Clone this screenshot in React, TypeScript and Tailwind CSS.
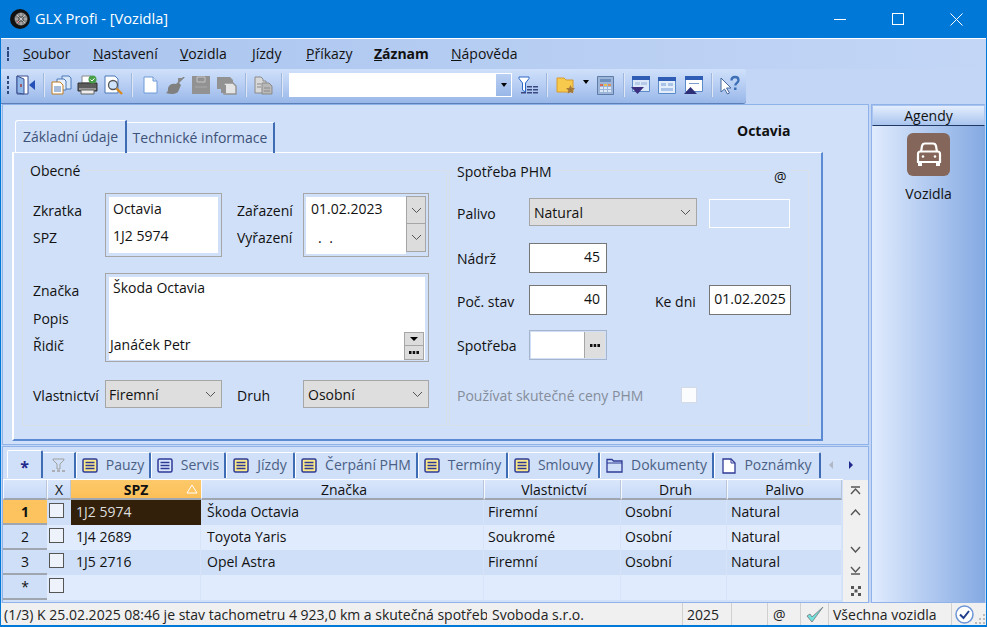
import React from "react";

const F = { fontFamily: '"Open Sans","Noto Sans",sans-serif' };

function Chevron({ cls = "" }: { cls?: string }) {
  return (
    <svg width="11" height="7" viewBox="0 0 11 7" className={cls}>
      <path d="M1 1l4.5 4.5L10 1" fill="none" stroke="#555" strokeWidth="1" />
    </svg>
  );
}
function Dots() {
  return (
    <svg width="10" height="3" viewBox="0 0 10 3">
      <path d="M0 0h2.5v3H0zM3.7 0h2.5v3H3.7zM7.4 0H10v3H7.4z" fill="#111" />
    </svg>
  );
}
function Sep() {
  return <div className="w-[2px] h-[24px] bg-gradient-to-r from-[#7f9fd2] to-white shrink-0" />;
}
function Grip({ h }: { h: string }) {
  return (
    <div className={`flex flex-col justify-between w-[2px] shrink-0 ${h}`}>
      {[0, 1, 2, 3].map((i) => (
        <div key={i} className="w-[2px] h-[3px] bg-[#2c4a80]" />
      ))}
    </div>
  );
}

const I = {
  door: (
    <svg width="19" height="20" viewBox="0 0 19 20">
      <path d="M1 1h11v18H1z" fill="#fff" stroke="#3a4d8f" />
      <path d="M1 1l7 3v15l-7-1z" fill="#8fb8e8" stroke="#3a4d8f" />
      <path d="M5 9v3" stroke="#a33" strokeWidth="1.4" />
      <path d="M13 10l6-5v10z" fill="#2450b8" />
    </svg>
  ),
  copy: (
    <svg width="21" height="20" viewBox="0 0 21 20">
      <path d="M11 1h7l2 2v11h-9z" fill="#d7e6f8" stroke="#4a78b8" />
      <path d="M6 4h7l2 2v9H6z" fill="#e8f0fb" stroke="#4a78b8" />
      <path d="M1 7h8l3 3v9H1z" fill="#fff" stroke="#c07a20" />
      <path d="M3 12h7M3 14h7M3 16h7" stroke="#4a78b8" />
    </svg>
  ),
  print: (
    <svg width="21" height="20" viewBox="0 0 21 20">
      <path d="M5 1h9v7H5z" fill="#fff" stroke="#888" />
      <path d="M1 8h19v8H1z" fill="#5c5c5c" stroke="#333" />
      <path d="M2 13h17v2H2z" fill="#999" />
      <path d="M4 15h13v4H4z" fill="#eee" stroke="#666" />
      <circle cx="15.5" cy="4.5" r="4" fill="#4aa04a" />
      <path d="M13.5 4.5l1.5 1.5 2.5-2.7" stroke="#fff" fill="none" />
    </svg>
  ),
  preview: (
    <svg width="20" height="20" viewBox="0 0 20 20">
      <path d="M1 1h10l3 3v14H1z" fill="#fff" stroke="#4a78b8" />
      <circle cx="9" cy="10" r="4.5" fill="#cfe4fa" stroke="#555" strokeWidth="1.3" />
      <path d="M12.5 13.5l5.5 5.5" stroke="#d88a20" strokeWidth="2.4" />
    </svg>
  ),
  page: (
    <svg width="15" height="18" viewBox="0 0 15 18">
      <path d="M1 1h9l4 4v12H1z" fill="#fff" stroke="#6c9ad8" />
      <path d="M10 1v4h4" fill="#cfe0f6" stroke="#6c9ad8" />
    </svg>
  ),
  brush: (
    <svg width="21" height="19" viewBox="0 0 21 19">
      <path d="M20 1l-6 6 2 2-3 7c-4 3-8 2-12 1 2-1 2-3 2-5 1-4 5-5 8-4l7-7z" fill="#808080" />
      <path d="M13 2h5l-5 5z" fill="#8a8a8a" />
    </svg>
  ),
  disk: (
    <svg width="18" height="18" viewBox="0 0 18 18">
      <path d="M0 0h18v18H0z" fill="#929292" />
      <path d="M5 1h8v5H5z" fill="none" stroke="#c4c4c4" />
      <path d="M3 11h12" stroke="#a8a8a8" />
    </svg>
  ),
  pages: (
    <svg width="20" height="19" viewBox="0 0 20 19">
      <path d="M0 1h13l3 3v9H0z" fill="#929292" />
      <path d="M7 7h9l3 3v8H7z" fill="#e4e4e4" stroke="#929292" strokeWidth="1.4" />
      <path d="M4 9h5v8H4z" fill="#929292" />
    </svg>
  ),
  docs: (
    <svg width="19" height="19" viewBox="0 0 19 19">
      <path d="M1 1h6l2 2v2h3v12H1z" fill="#d8d8d8" stroke="#8a8a8a" />
      <path d="M8 7h7l3 3v8H8z" fill="#b8b8b8" stroke="#8a8a8a" />
      <path d="M3 8h4M3 11h4M10 12h6M10 15h6" stroke="#8a8a8a" />
    </svg>
  ),
  filter: (
    <svg width="21" height="18" viewBox="0 0 21 18">
      <path d="M1 1h10v1.5L7.5 7v9l-3-2V7L1 2.5z" fill="#fff" stroke="#2a66c8" />
      <path d="M9 10h5v1.6H9zM9 13h5v1.6H9zM3 16h5v1.6H3zM9 16h5v1.6H9zM15 10h5v1.6h-5zM15 13h5v1.6h-5zM15 16h5v1.6h-5z" fill="#3a4a80" />
    </svg>
  ),
  folder: (
    <svg width="20" height="19" viewBox="0 0 20 19">
      <path d="M1 2h7l2 2h7v12H1z" fill="#f7c94c" stroke="#d79a2e" />
      <path d="M14.5 9l1.4 2.9 3.1.4-2.3 2.2.6 3.1-2.8-1.500-2.8 1.500.6-3.1-2.3-2.2 3.1-.4z" fill="#a2773a" />
    </svg>
  ),
  calc: (
    <svg width="17" height="19" viewBox="0 0 17 19">
      <path d="M.5.5h16v18H.5z" fill="#9db5d8" stroke="#5f7ca8" />
      <path d="M3 3h11v3H3z" fill="#6f8fbd" />
      <path d="M3 8h3v2H3z" fill="#d86a5a" />
      <path d="M7 8h3v2H7z" fill="#e8c14a" />
      <path d="M11 8h3v2h-3z" fill="#e0905a" />
      <path d="M3 11h3v2H3zM7 11h3v2H7zM11 11h3v2h-3zM3 14h3v2H3zM7 14h3v2H7zM11 14h3v2h-3z" fill="#dbe8f7" />
    </svg>
  ),
  winDown: (
    <svg width="19" height="19" viewBox="0 0 19 19">
      <path d="M1.500.5h17v15h-17z" fill="#dbe8fa" stroke="#5a8ac8" />
      <path d="M1 0h18v4H1z" fill="#2f5db5" />
      <path d="M4 6h5v3H4zM10 6h6v3h-6z" fill="#b5cbe8" />
      <path d="M0 11h13l-6.500 7z" fill="#3a2f80" />
    </svg>
  ),
  win: (
    <svg width="18" height="17" viewBox="0 0 18 17">
      <path d="M.5.5h17v16H.5z" fill="#e4eefb" stroke="#5a8ac8" />
      <path d="M0 0h18v4H0z" fill="#2f5db5" />
      <path d="M3 6h5v3H3zM10 6h5v3h-5zM3 11h12v3H3z" fill="#a9c4e8" />
    </svg>
  ),
  winUp: (
    <svg width="19" height="19" viewBox="0 0 19 19">
      <path d="M1.500.5h17v15h-17z" fill="#fff" stroke="#5a8ac8" />
      <path d="M1 0h18v4H1z" fill="#2f5db5" />
      <path d="M5 7h10v1H5z" fill="#7a9ccc" />
      <path d="M0 18h13L6.500 11z" fill="#2c2f78" />
    </svg>
  ),
  help: (
    <svg width="21" height="20" viewBox="0 0 21 20">
      <path d="M1 3v14l3.500-3 3 5 2-1-3-5H11z" fill="#fff" stroke="#47689c" />
      <path d="M11.500 5.500c0-2 1.500-3.500 3.500-3.500s3.500 1.300 3.500 3.200c0 2.500-3.200 2.800-3.200 5.300" fill="none" stroke="#3c6fb5" strokeWidth="2.300" />
      <path d="M14 12.500h2.500V15H14z" fill="#3c6fb5" />
    </svg>
  ),
};

function Labels({ items }: { items: string[] }) {
  return (
    <div className="flex flex-col pt-[4px]">
      {items.map((t) => (
        <div key={t} className="h-[27px] flex items-center">{t}</div>
      ))}
    </div>
  );
}
function Select({ w, text, pl = "pl-[4px]" }: { w: string; text: string; pl?: string }) {
  return (
    <div className={`${w} h-[28px] bg-[#dedede] border border-[#a6a6a6] flex items-center justify-between ${pl} pr-[5px]`}>
      <span>{text}</span>
      <Chevron />
    </div>
  );
}
function NumInput({ v, w = "w-[78px]", right = true }: { v: string; w?: string; right?: boolean }) {
  return (
    <div className={`${w} h-[30px] bg-white border border-[#767676] flex items-center pb-[3px] ${right ? "justify-end pr-[6px]" : "justify-center"}`}>{v}</div>
  );
}
function TabIcon({ kind }: { kind: string }) {
  if (kind === "folder")
    return (
      <svg width="17" height="15" viewBox="0 0 17 15">
        <path d="M1 3V1.500h5L7.500 3H16v11H1z" fill="none" stroke="#2e3a96" strokeWidth="1.300" />
        <path d="M1 5h15" stroke="#2e3a96" />
      </svg>
    );
  if (kind === "note")
    return (
      <svg width="14" height="16" viewBox="0 0 14 16">
        <path d="M1 1h8l4 4v10H1z" fill="#fff" stroke="#2e3a96" strokeWidth="1.300" />
        <path d="M9 1v4h4" fill="none" stroke="#2e3a96" />
      </svg>
    );
  const y = kind === "yellow";
  return (
    <svg width="16" height="15" viewBox="0 0 16 15">
      <rect x="1" y="1" width="14" height="13" rx="1.500" fill={y ? "#fbe98a" : "#d9e6fb"} stroke="#2e3a96" strokeWidth="1.500" />
      <path d="M3.500 4.500h9M3.500 7.500h9M3.500 10.500h9" stroke="#2e3a96" strokeWidth="1.300" />
    </svg>
  );
}
function BTab({ w, icon, text, gap = "gap-[8px]" }: { w: string; icon: string; text: string; gap?: string }) {
  return (
    <div className={`${w} h-[26px] flex items-center justify-center ${gap} border-t border-l border-white border-r-2 border-r-[#3f6db5] text-[#4a5f85] rounded-t-[2px] shrink-0`}>
      <TabIcon kind={icon} />
      <span className="pb-[2px]">{text}</span>
    </div>
  );
}

const rows = [
  { n: "1", spz: "1J2 5974", z: "Škoda Octavia", v: "Firemní", d: "Osobní", p: "Natural" },
  { n: "2", spz: "1J4 2689", z: "Toyota Yaris", v: "Soukromé", d: "Osobní", p: "Natural" },
  { n: "3", spz: "1J5 2716", z: "Opel Astra", v: "Firemní", d: "Osobní", p: "Natural" },
  { n: "*", spz: "", z: "", v: "", d: "", p: "" },
];

function Head({ w, t, children, pl = "pl-[3px]" }: { w: string; t: string; children?: React.ReactNode; pl?: string }) {
  return (
    <div className={`${w} h-full flex items-center justify-center ${pl} border-l border-l-white/80 border-r border-r-[#b9c6da] border-b-2 border-b-[#a0a6b0] bg-gradient-to-b from-[#d9e6fb] to-[#c6d9f7] shrink-0`}>
      {t}
      {children}
    </div>
  );
}
function Cell({ w, t, bg, pl = "pl-[4px]" }: { w: string; t: string; bg: string; pl?: string }) {
  return <div className={`${w} h-full flex items-center ${pl} pb-[2px] border-r border-r-[#d6e3f8] shrink-0 ${bg}`}>{t}</div>;
}

export default function App() {
  return (
    <div style={F} className="w-[987px] h-[627px] overflow-hidden flex flex-col bg-[#c3d6f6] border-x border-b-2 border-[#0078d7] text-[14px] leading-[19px] text-[#111]">
      {/* title */}
      <div className="h-[38px] bg-[#0078d7] flex items-center text-white shrink-0 -mx-px">
        <svg width="20" height="20" viewBox="0 0 20 20" className="ml-[10px]">
          <circle cx="10" cy="10" r="10" fill="#111" />
          <circle cx="11" cy="10" r="6.500" fill="#888" />
          <circle cx="11" cy="10" r="3" fill="#333" />
          <circle cx="8" cy="13" r="1" fill="#c33" />
          <path d="M11 4v12M5 10h12M7 6l8 8M15 6l-8 8" stroke="#ddd" strokeWidth=".7" />
        </svg>
        <span className="ml-[5px] text-[14.6px] pb-[1px]">GLX Profi - [Vozidla]</span>
        <div className="ml-auto flex mr-[2px]">
          <div className="w-[58px] h-[38px] flex items-center justify-center">
            <div className="w-[12px] h-px bg-white" />
          </div>
          <div className="w-[58px] h-[38px] flex items-center justify-center">
            <div className="w-[12px] h-[12px] border border-white" />
          </div>
          <div className="w-[58px] h-[38px] flex items-center justify-center">
            <svg width="13" height="13" viewBox="0 0 13 13"><path d="M.5.500l12 12M12.500.500l-12 12" stroke="#fff" /></svg>
          </div>
        </div>
      </div>
      <div className="h-px bg-white shrink-0" />

      {/* menu */}
      <div className="h-[30px] bg-gradient-to-r from-[#a9c4ee] to-[#c3d6f6] flex items-center pl-[6px] shrink-0">
        <Grip h="h-[14px]" />
        <div className="flex ml-[14px] pb-[1px]">
          <span className="w-[70px]"><u>S</u>oubor</span>
          <span className="w-[87px]"><u>N</u>astavení</span>
          <span className="w-[72px]"><u>V</u>ozidla</span>
          <span className="w-[54px]"><u>J</u>ízdy</span>
          <span className="w-[68px]"><u>P</u>říkazy</span>
          <span className="w-[77px] font-bold"><u>Z</u>áznam</span>
          <span><u>N</u>ápověda</span>
        </div>
      </div>

      {/* toolbar */}
      <div className="h-[35px] shrink-0 flex">
        <div className="w-[745px] h-[35px] rounded-r-[3px] border-b border-b-[#5d7fb8] bg-gradient-to-b from-[#cfe0fa] via-[#b6cdf3] to-[#98b7e8] flex items-center pl-[6px] pb-[2px]">
          <Grip h="h-[18px]" />
          <div className="ml-[7px]">{I.door}</div>
          <div className="ml-[8px]"><Sep /></div>
          <div className="ml-[6px]">{I.copy}</div>
          <div className="ml-[5px]">{I.print}</div>
          <div className="ml-[6px]">{I.preview}</div>
          <div className="ml-[7px]"><Sep /></div>
          <div className="ml-[10px]">{I.page}</div>
          <div className="ml-[7px]">{I.brush}</div>
          <div className="ml-[6px]">{I.disk}</div>
          <div className="ml-[7px]">{I.pages}</div>
          <div className="ml-[8px]"><Sep /></div>
          <div className="ml-[7px]">{I.docs}</div>
          <div className="ml-[8px]"><Sep /></div>
          <div className="ml-[6px] w-[223px] h-[24px] bg-white flex justify-end">
            <div className="w-[17px] h-full border border-white bg-gradient-to-b from-[#b9cff3] to-[#98b7e8] flex items-center justify-center">
              <div className="w-0 h-0 border-x-[3px] border-x-transparent border-t-[4px] border-t-black" />
            </div>
          </div>
          <div className="ml-[6px]">{I.filter}</div>
          <div className="ml-[7px]"><Sep /></div>
          <div className="ml-[8px]">{I.folder}</div>
          <div className="ml-[7px] mb-[6px] w-0 h-0 border-x-[3px] border-x-transparent border-t-[4px] border-t-black" />
          <div className="ml-[8px]">{I.calc}</div>
          <div className="ml-[9px]"><Sep /></div>
          <div className="ml-[6px]">{I.winDown}</div>
          <div className="ml-[8px]">{I.win}</div>
          <div className="ml-[8px]">{I.winUp}</div>
          <div className="ml-[8px]"><Sep /></div>
          <div className="ml-[7px]">{I.help}</div>
        </div>
      </div>

      {/* body */}
      <div className="flex-1 min-h-0 flex pl-px">
        <div className="w-[867px] flex flex-col shrink-0">
          {/* top pane */}
          <div className="h-[341px] border border-[#8fb2e8] bg-[#d0e0f8] pl-[9px] pt-[15px] shrink-0">
            <div className="flex h-[33px] relative">
              <div className="w-[112px] h-[33px] flex items-center justify-center border-t border-l border-white border-r-2 border-r-[#3f6db5] rounded-tl-[3px] ml-[3px] text-[#3d5278] pb-[1px]">Základní údaje</div>
              <div className="w-[148px] h-[31px] mt-[2px] flex items-center justify-center border-t border-white border-r-2 border-r-[#3f6db5] text-[#3d5278] pb-[2px]">Technické informace</div>
              <div className="absolute left-[725px] top-[1px] font-bold">Octavia</div>
            </div>
            <div className="w-[811px] h-[289px] border-t border-l-2 border-white border-r-2 border-r-[#5a8bd4] border-b-2 border-b-[#5a8bd4] pl-[8px] pt-[17px] flex gap-[2px] -mt-px">
              {/* Obecne */}
              <div className="relative w-[425px] h-[256px] border border-[#d9e0ea] pl-[10px] pt-[22px] flex flex-col shrink-0">
                <div className="absolute left-[3px] -top-[10px] px-[4px] bg-[#d0e0f8]">Obecné</div>
                <div className="flex h-[64px]">
                  <div className="w-[72px]"><Labels items={["Zkratka", "SPZ"]} /></div>
                  <div className="w-[117px] h-[64px] border border-[#a6a6a6] p-[3px]">
                    <div className="bg-white h-full pl-[4px] flex flex-col text-[#111]">
                      <div className="h-[27px] flex items-center pb-[6px] pt-[2px]">Octavia</div>
                      <div className="h-[27px] flex items-center pb-[4px]">1J2 5974</div>
                    </div>
                  </div>
                  <div className="w-[66px] ml-[15px]"><Labels items={["Zařazení", "Vyřazení"]} /></div>
                  <div className="w-[126px] h-[64px] border border-[#a6a6a6] p-[2px] flex">
                    <div className="flex-1 bg-white flex flex-col pl-[5px] mt-px">
                      <div className="h-[27px] flex items-center pb-[5px]">01.02.2023</div>
                      <div className="h-[27px] flex items-center pb-px pl-[7px] tracking-[2px]">. .</div>
                    </div>
                    <div className="w-[20px] flex flex-col">
                      <div className="h-[28px] bg-[#dcdcdc] border border-[#a6a6a6] flex items-center justify-center"><Chevron /></div>
                      <div className="h-[28px] bg-[#dcdcdc] border border-t-0 border-[#a6a6a6] flex items-center justify-center"><Chevron /></div>
                    </div>
                  </div>
                </div>
                <div className="flex h-[89px] mt-[16px]">
                  <div className="w-[72px] flex flex-col">
                    <div className="h-[34px] shrink-0 flex items-center">Značka</div>
                    <div className="h-[22px] shrink-0 flex items-center">Popis</div>
                    <div className="h-[32px] shrink-0 flex items-center">Řidič</div>
                  </div>
                  <div className="w-[324px] h-[89px] border border-[#a6a6a6] p-[3px] pb-[1px]">
                    <div className="bg-white h-full flex flex-col relative">
                      <div className="pl-[4px] pt-[1px]">Škoda Octavia</div>
                      <div className="mt-auto flex items-end justify-between pl-[1px]">
                        <span className="pb-[6px]">Janáček Petr</span>
                        <div className="flex flex-col w-[20px] mr-px">
                          <div className="h-[14px] bg-[#dcdcdc] border border-[#a6a6a6] flex items-center justify-center">
                            <div className="w-0 h-0 border-x-[4px] border-x-transparent border-t-[4px] border-t-black" />
                          </div>
                          <div className="h-[14px] bg-[#dcdcdc] border border-t-0 border-[#a6a6a6] flex items-center justify-center"><Dots /></div>
                        </div>
                      </div>
                    </div>
                  </div>
                </div>
                <div className="flex h-[28px] mt-[18px] items-center">
                  <div className="w-[72px] whitespace-nowrap pt-[3px]">Vlastnictví</div>
                  <Select w="w-[117px]" text="Firemní" pl="pl-[3px]" />
                  <div className="w-[66px] ml-[15px] pt-[3px]">Druh</div>
                  <Select w="w-[126px]" text="Osobní" />
                </div>
              </div>
              {/* Spotreba */}
              <div className="relative w-[360px] h-[256px] border border-[#d9e0ea] pl-[7px] pt-[27px] flex flex-col shrink-0">
                <div className="absolute left-[3px] -top-[9px] px-[4px] bg-[#d0e0f8]">Spotřeba PHM</div>
                <div className="absolute left-[321px] -top-[4px] px-[3px] bg-[#d0e0f8]">@</div>
                <div className="flex items-center h-[28px]">
                  <div className="w-[72px] pt-[2px]">Palivo</div>
                  <Select w="w-[168px]" text="Natural" />
                  <div className="w-[81px] h-[29px] ml-[12px] border border-white mt-[2px]" />
                </div>
                <div className="flex items-center h-[30px] mt-[17px]">
                  <div className="w-[72px]">Nádrž</div>
                  <NumInput v="45" />
                </div>
                <div className="flex items-center h-[30px] mt-[12px]">
                  <div className="w-[72px] pt-[2px]">Poč. stav</div>
                  <NumInput v="40" />
                  <div className="w-[54px] ml-[48px] pt-[2px]">Ke dni</div>
                  <NumInput v="01.02.2025" w="w-[82px]" right={false} />
                </div>
                <div className="flex items-center h-[30px] mt-[15px]">
                  <div className="w-[72px] pt-px">Spotřeba</div>
                  <div className="w-[78px] h-[30px] border border-[#a6b4cc] p-px flex">
                    <div className="flex-1 bg-white" />
                    <div className="w-[21px] bg-[#dedede] border-l border-[#a6a6a6] flex items-center justify-center"><Dots /></div>
                  </div>
                </div>
                <div className="flex items-center h-[16px] mt-[27px] text-[#858d9b]">
                  <div className="w-[224px] whitespace-nowrap">Používat skutečné ceny PHM</div>
                  <div className="w-[16px] h-[16px] bg-white/90 border border-[#d4dbe6]" />
                </div>
              </div>
            </div>
          </div>

          {/* bottom pane */}
          <div className="h-[157px] mt-[1px] border border-[#8fb2e8] bg-[#d0e0f8] flex flex-col shrink-0">
            <div className="h-[33px] flex items-end pl-[4px] pb-px border-b border-b-white shrink-0 w-[840px]">
              <div className="w-[36px] h-[28px] border-t border-l border-white border-r-2 border-r-[#3f6db5] rounded-t-[2px] flex items-center justify-center text-[#1f2a8c] font-bold text-[16px] pt-[6px] shrink-0">*</div>
              <div className="w-[33px] h-[26px] border-t border-white border-r-2 border-r-[#3f6db5] flex items-center justify-center shrink-0">
                <svg width="15" height="15" viewBox="0 0 15 15">
                  <path d="M2 1h11v1L9 6v5l-3 0V6L2 2z" fill="none" stroke="#a0a0a0" />
                  <path d="M1 13h3M6 13h3M11 13h3" stroke="#a0a0a0" strokeWidth="1.500" />
                </svg>
              </div>
              <BTab w="w-[75px]" icon="yellow" text="Pauzy" />
              <BTab w="w-[75px]" icon="blue" text="Servis" />
              <BTab w="w-[69px]" icon="yellow" text="Jízdy" />
              <BTab w="w-[123px]" icon="yellow" text="Čerpání PHM" />
              <BTab w="w-[90px]" icon="yellow" text="Termíny" />
              <BTab w="w-[92px]" icon="yellow" text="Smlouvy" />
              <BTab w="w-[114px]" icon="folder" text="Dokumenty" />
              <BTab w="w-[107px]" icon="note" text="Poznámky" />
              <div className="flex items-center h-[26px] ml-[8px] gap-[16px]">
                <div className="w-0 h-0 border-y-[4px] border-y-transparent border-r-[4px] border-r-[#b0b8c8]" />
                <div className="w-0 h-0 border-y-[4px] border-y-transparent border-l-[4px] border-l-[#1f2a8c]" />
              </div>
            </div>
            <div className="flex flex-1 min-h-0">
              <div className="w-[839px] flex flex-col shrink-0">
                <div className="flex h-[20px] shrink-0">
                  <Head w="w-[44px]" t="" />
                  <Head w="w-[24px]" t="X" pl="pl-0" />
                  <div className="w-[130px] h-full relative flex items-center justify-center font-bold bg-gradient-to-b from-[#fdc96a] to-[#fcbf58] border-b-2 border-b-[#a0a6b0] shrink-0">
                    SPZ
                    <svg width="12" height="10" viewBox="0 0 12 10" className="absolute right-[3px] top-[4px]"><path d="M6 1l5 8H1z" fill="none" stroke="#fff" /></svg>
                  </div>
                  <Head w="w-[283px]" t="Značka" />
                  <Head w="w-[137px]" t="Vlastnictví" />
                  <Head w="w-[106px]" t="Druh" />
                  <Head w="w-[115px]" t="Palivo" pl="pl-0" />
                </div>
                {rows.map((r, i) => {
                  const bg = i % 2 === 0 ? "bg-[#cfdff8]" : "bg-[#e0ebfd]";
                  return (
                    <div key={r.n} className="flex h-[25px] shrink-0">
                      <div className={`w-[44px] h-full flex items-center justify-center pb-[1px] border-b-2 border-b-[#a0a6b0] shrink-0 ${i === 0 ? "bg-[#fdc35e] font-bold" : "bg-[#cfdff8]"}`}>{r.n}</div>
                      <div className={`w-[24px] h-full flex items-center justify-center pr-[5px] pb-[4px] shrink-0 ${bg}`}>
                        <div className="w-[15px] h-[15px] bg-[#eef3fb] border border-[#555] shrink-0" />
                      </div>
                      {i === 0 ? (
                        <div className="w-[130px] h-full flex items-center pl-[5px] pb-[2px] bg-[#33200a] text-[#ddd] shrink-0">{r.spz}</div>
                      ) : (
                        <div className={`w-[130px] h-full flex items-center pl-[5px] pb-[2px] border-r border-r-[#d6e3f8] shrink-0 ${bg}`}>{r.spz}</div>
                      )}
                      <Cell w="w-[283px]" t={r.z} bg={bg} pl="pl-[6px]" />
                      <Cell w="w-[137px]" t={r.v} bg={bg} />
                      <Cell w="w-[106px]" t={r.d} bg={bg} />
                      <Cell w="w-[115px]" t={r.p} bg={bg} />
                    </div>
                  );
                })}
              </div>
              <div className="w-[25px] bg-[#f0f0f0] flex flex-col items-center pt-[6px] ml-px">
                <svg width="11" height="9" viewBox="0 0 11 9"><path d="M1 1h9M1 8l4.500-5L10 8" fill="none" stroke="#555" strokeWidth="1.400" /></svg>
                <svg width="11" height="7" viewBox="0 0 11 7" className="mt-[14px]"><path d="M1 6l4.500-5L10 6" fill="none" stroke="#555" strokeWidth="1.400" /></svg>
                <svg width="11" height="7" viewBox="0 0 11 7" className="mt-[30px]"><path d="M1 1l4.500 5L10 1" fill="none" stroke="#555" strokeWidth="1.400" /></svg>
                <svg width="11" height="9" viewBox="0 0 11 9" className="mt-[13px]"><path d="M1 1l4.500 5L10 1M1 8h9" fill="none" stroke="#555" strokeWidth="1.400" /></svg>
                <svg width="10" height="10" viewBox="0 0 10 10" className="mt-[11px]"><path d="M0 0h3v3H0zM7 0h3v3H7zM3.500 3.500h3v3h-3zM0 7h3v3H0zM7 7h3v3H7z" fill="#555" /></svg>
              </div>
            </div>
          </div>
        </div>

        {/* right pane */}
        <div className="w-[114px] ml-[2px] h-[499px] border border-[#8fb2e8] border-r-0 bg-gradient-to-r from-[#e0ebfd] to-[#84a9e2] flex flex-col items-center shrink-0 mr-[2px]">
          <div className="w-full h-[21px] border border-[#a9c4ee] border-b-[#1f3864] bg-gradient-to-b from-[#e4eefd] to-[#a9c4ee] flex items-center justify-center shrink-0">Agendy</div>
          <div className="w-[43px] h-[43px] rounded-[6px] bg-[#84675a] mt-[7px] flex items-center justify-center">
            <svg width="28" height="26" viewBox="0 0 28 26">
              <path d="M6 10l1-6c.3-1.500 1.500-2.500 3-2.500h8c1.500 0 2.700 1 3 2.500l1 6" fill="none" stroke="#fff" strokeWidth="2.200" />
              <path d="M3 12c0-1.500 1-2.500 2.500-2.500h17c1.500 0 2.500 1 2.500 2.500v8H3z" fill="none" stroke="#fff" strokeWidth="2.200" />
              <circle cx="8" cy="14.500" r="1.300" fill="#fff" />
              <circle cx="20" cy="14.500" r="1.300" fill="#fff" />
              <path d="M3 20h4v4H3zM21 20h4v4h-4z" fill="#fff" />
            </svg>
          </div>
          <div className="mt-[8px]">Vozidla</div>
        </div>
      </div>

      {/* status */}
      <div className="h-[22px] bg-[#f0f0f0] flex items-center shrink-0 text-[#222]">
        <div className="w-[681px] flex h-full items-center pl-[3px] shrink-0 pt-px">
          <span className="w-[483px] overflow-hidden whitespace-nowrap">(1/3) K 25.02.2025 08:46 je stav tachometru 4 923,0 km a skutečná spotřeba</span>
          <span className="ml-[5px]">Svoboda s.r.o.</span>
        </div>
        <div className="w-[49px] h-full border-l border-[#d0d0d0] flex items-center pl-[4px] shrink-0 pt-px">2025</div>
        <div className="w-[36px] h-full border-l border-[#d0d0d0] shrink-0" />
        <div className="w-[33px] h-full border-l border-[#d0d0d0] flex items-center pl-[5px] shrink-0 pt-px">@</div>
        <div className="w-[28px] h-full border-l border-[#d0d0d0] flex items-center justify-center shrink-0">
          <svg width="20" height="19" viewBox="0 0 20 19"><path d="M2 11l5 6L18 2 7 12l-2-3z" fill="#6fe3dc" stroke="#7d8a90" /></svg>
        </div>
        <div className="w-[123px] h-full border-l border-[#d0d0d0] flex items-center pl-[4px] shrink-0 pt-px">Všechna vozidla</div>
        <div className="flex-1 h-full border-l border-[#d0d0d0] flex items-center pl-[3px] relative">
          <svg width="19" height="19" viewBox="0 0 19 19">
            <circle cx="9.500" cy="9.500" r="8.500" fill="#fff" stroke="#6d95d8" strokeWidth="1.500" />
            <path d="M5 9.500l3.500 3.500L14 6" fill="none" stroke="#1f3f8c" strokeWidth="2" />
          </svg>
          <svg width="11" height="11" viewBox="0 0 11 11" className="absolute right-0 bottom-0">
            <path d="M8 0h2v2H8zM4 4h2v2H4zM8 4h2v2H8zM0 8h2v2H0zM4 8h2v2H4zM8 8h2v2H8z" fill="#bbb" />
          </svg>
        </div>
      </div>
    </div>
  );
}
